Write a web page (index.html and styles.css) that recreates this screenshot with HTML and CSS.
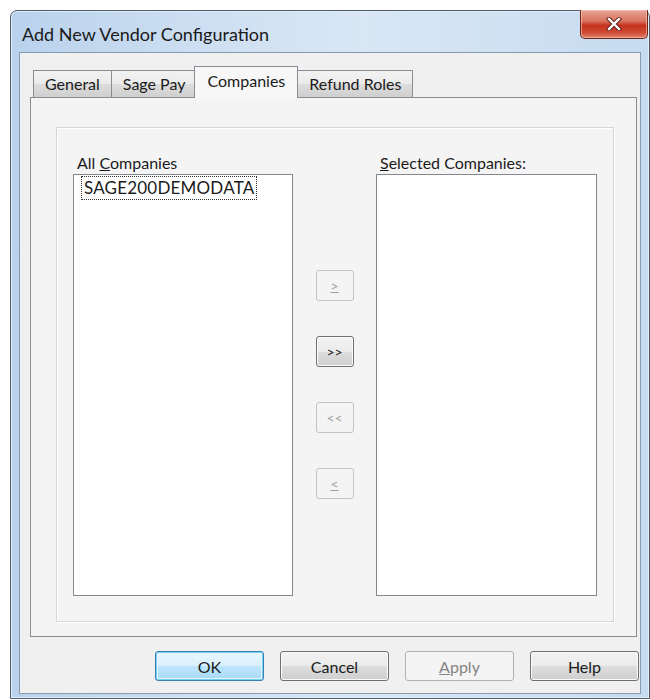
FILE: index.html
```html
<!DOCTYPE html>
<html lang="en">
<head>
<meta charset="utf-8">
<title>Add New Vendor Configuration</title>
<link rel="stylesheet" href="styles.css">
</head>
<body>
<div class="window">
  <div class="titlebar">
    <span class="title">Add New Vendor Configuration</span>
    <button class="close" type="button" aria-label="Close">
      <svg width="16" height="14" viewBox="0 0 16 14">
        <path d="M3 2 L13 12 M13 2 L3 12" stroke="#5a1a14" stroke-width="4.2" stroke-linecap="square"/>
        <path d="M3 2 L13 12 M13 2 L3 12" stroke="#ffffff" stroke-width="2.4" stroke-linecap="square"/>
      </svg>
    </button>
  </div>

  <div class="client">
    <div class="tabs">
      <div class="tab">General</div>
      <div class="tab">Sage Pay</div>
      <div class="tab active">Companies</div>
      <div class="tab">Refund Roles</div>
    </div>

    <div class="panel">
      <div class="group">
        <div class="col">
          <div class="label">All <u>C</u>ompanies</div>
          <div class="list">
            <span class="item focused">SAGE200DEMODATA</span>
          </div>
        </div>

        <div class="movers">
          <button class="mv" type="button" disabled><u>&gt;</u></button>
          <button class="mv enabled" type="button">&gt;&gt;</button>
          <button class="mv" type="button" disabled>&lt;&lt;</button>
          <button class="mv" type="button" disabled><u>&lt;</u></button>
        </div>

        <div class="col">
          <div class="label"><u>S</u>elected Companies:</div>
          <div class="list"></div>
        </div>
      </div>
    </div>

    <div class="actions">
      <button class="btn default" type="button">OK</button>
      <button class="btn" type="button">Cancel</button>
      <button class="btn" type="button" disabled><u>A</u>pply</button>
      <button class="btn" type="button">Help</button>
    </div>
  </div>
</div>
</body>
</html>
```
FILE: styles.css
```css
html, body {
  margin: 0;
  padding: 0;
  background: #ffffff;
  overflow: hidden;
}

body {
  font-family: "Lato", "Noto Sans", sans-serif;
  font-size: 16px;
  color: #1b1b1b;
}

/* Outer window with the glass frame */
.window {
  margin: 10px 0 0 10px;
  width: 638px;
  height: 687px;
  border: 1px solid #4d5a68;
  border-radius: 7px 7px 0 0;
  background: linear-gradient(90deg, #b9d2ec 0%, #cddff2 30%, #d9e7f5 55%, #c6dbf0 100%);
  display: flex;
  flex-direction: column;
  box-shadow: inset 0 0 0 1px #e4eef9;
}

.titlebar {
  height: 41px;
  display: flex;
  align-items: flex-start;
  padding-left: 11px;
}

.title {
  font-size: 18px;
  color: #1a1a1a;
  line-height: 20px;
  margin-top: 13px;
}

.close {
  margin-left: auto;
  margin-right: 1px;
  margin-top: -1px;
  width: 68px;
  height: 29px;
  padding: 0;
  border: 1px solid #6c2418;
  border-top: none;
  border-radius: 0 0 5px 5px;
  background: linear-gradient(180deg, #e7a596 0%, #d9735f 40%, #c5321d 55%, #cf4a34 80%, #e0826c 100%);
  box-shadow: inset 0 0 0 1px rgba(255, 210, 200, 0.55);
  display: flex;
  align-items: center;
  justify-content: center;
}

/* Dialog client area */
.client {
  margin: 0 8px 4px 8px;
  flex: 1;
  background: #f0f0f0;
  border: 1px solid #8a9bb0;
  display: flex;
  flex-direction: column;
}

.tabs {
  display: flex;
  align-items: flex-end;
  margin: 12px 0 0 13px;
  height: 32px;
  position: relative;
  z-index: 1;
}

.tab {
  height: 26px;
  line-height: 25px;
  padding: 0 11px;
  border: 1px solid #898c95;
  border-bottom: none;
  background: linear-gradient(180deg, #f2f2f2 0%, #ebebeb 50%, #dddddd 51%, #cfcfcf 100%);
  margin-right: -1px;
  color: #1b1b1b;
}

.tab.active {
  height: 31px;
  line-height: 27px;
  padding: 0 12px;
  margin: 0 -1px -1px -2px;
  background: #f7f7f7;
  border-color: #898c95;
  position: relative;
  z-index: 2;
}

.panel {
  margin: 0 3px 0 10px;
  height: 538px;
  border: 1px solid #898c95;
  background: #f4f4f4;
  display: flex;
}

.group {
  margin: 29px 22px 14px 25px;
  flex: 1;
  border: 1px solid #d5d5d5;
  box-shadow: inset 1px 1px 0 #ffffff, 1px 1px 0 #ffffff;
  display: flex;
  padding: 0 15px 25px 16px;
  align-items: flex-end;
}

.col {
  display: flex;
  flex-direction: column;
}

.label {
  padding-left: 4px;
  line-height: 20px;
  margin-bottom: 1px;
  color: #1b1b1b;
}

.list {
  width: 218px;
  height: 416px;
  background: #ffffff;
  border: 1px solid #828790;
  padding: 2px 8px;
  box-sizing: content-box;
  width: 202px;
}

.col:last-child .list {
  width: 203px;
}

.item {
  display: inline-block;
  font-size: 17px;
  line-height: 22px;
  padding: 0 2px;
  letter-spacing: 0.2px;
}

.item.focused {
  outline: 1px dotted #333333;
  outline-offset: 0;
}

.movers {
  width: 83px;
  align-self: stretch;
  display: flex;
  flex-direction: column;
  align-items: center;
  gap: 35px;
  padding-top: 142px;
  box-sizing: border-box;
}

.mv {
  width: 38px;
  height: 31px;
  padding: 0;
  font-family: "Lato", "Noto Sans", sans-serif;
  font-size: 14px;
  border: 1px solid #c0c4c8;
  border-radius: 3px;
  background: #f4f4f4;
  color: #a0a0a0;
}

.mv.enabled {
  border-color: #707070;
  color: #1b1b1b;
  background: linear-gradient(180deg, #f2f2f2 0%, #ebebeb 50%, #dddddd 51%, #cfcfcf 100%);
  box-shadow: inset 0 0 0 1px #fbfbfb;
}

.actions {
  display: flex;
  justify-content: flex-end;
  gap: 16px;
  padding-right: 1px;
  margin-top: 14px;
}

.btn {
  width: 109px;
  height: 30px;
  padding: 0;
  font-family: "Lato", "Noto Sans", sans-serif;
  font-size: 16px;
  color: #1b1b1b;
  border: 1px solid #707070;
  border-radius: 3px;
  background: linear-gradient(180deg, #f2f2f2 0%, #ebebeb 50%, #dddddd 51%, #cfcfcf 100%);
  box-shadow: inset 0 0 0 1px #fbfbfb;
}

.btn.default {
  border-color: #3c7fb1;
  background: linear-gradient(180deg, #eaf6fd 0%, #d9f0fc 50%, #bee6fd 51%, #a7d9f5 100%);
  box-shadow: inset 0 0 0 1px #6fd1f5, inset 0 0 0 2px #e7f6fd;
}

.btn:disabled {
  border-color: #adb2b5;
  background: #f4f4f4;
  color: #838383;
  box-shadow: none;
}
```
